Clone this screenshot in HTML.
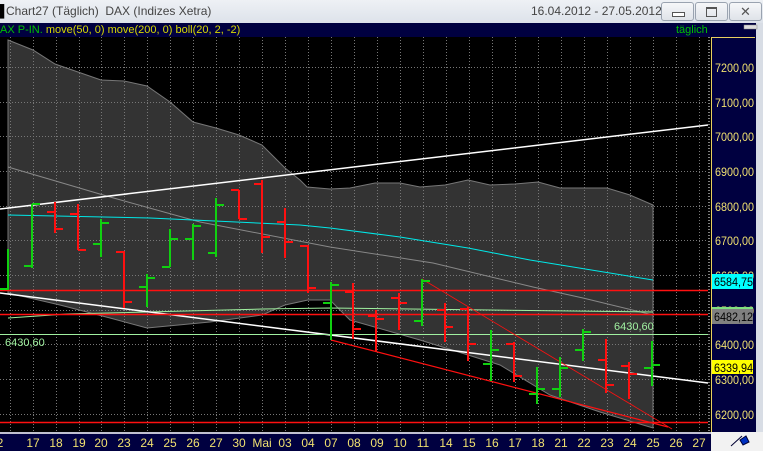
<!DOCTYPE html>
<html><head><meta charset="utf-8"><style>
body{margin:0;width:763px;height:451px;overflow:hidden;background:#000;font-family:"Liberation Sans",sans-serif;}
.t{position:absolute;left:0;top:0;width:763px;height:23px;background:linear-gradient(#eef1f5,#dde2ea);}
.t span{position:absolute;top:4px;font-size:12px;color:#444;white-space:nowrap;}
.b{position:absolute;top:2px;width:31px;height:17px;border:1px solid #9aa3b0;border-radius:3px;background:linear-gradient(#f6f7f9,#dfe3e9);}
.ind{position:absolute;left:0;top:23px;width:711px;height:14px;background:#000040;font-size:11px;line-height:14px;color:#d8d800;}
</style></head><body>
<div class="t"><span style="left:0;color:#000">▌</span><span style="left:6px">Chart27 (Täglich)&nbsp; DAX (Indizes Xetra)</span><span style="left:531px">16.04.2012 - 27.05.2012</span>
<div class="b" style="left:661px"><div style="position:absolute;left:10px;top:9px;width:11px;height:3px;border:1px solid #555;background:#fff"></div></div>
<div class="b" style="left:695px"><div style="position:absolute;left:10px;top:4px;width:9px;height:7px;border:1px solid #555;border-top-width:2px"></div></div>
<div class="b" style="left:729px;font-size:13px;text-align:center;color:#555;line-height:17px">✕</div></div>
<div class="ind"><span style="color:#00c000">AX P-IN.</span> move(50, 0) move(200, 0) boll(20, 2, -2)<span style="position:absolute;left:676px;color:#00c000">täglich</span></div>
<svg width="763" height="451" style="position:absolute;left:0;top:0" font-family="Liberation Sans">
<rect x="711" y="23" width="52" height="428" fill="#000040"/>
<rect x="756" y="23" width="7" height="428" fill="#d8dde5"/>
<rect x="744" y="25" width="13" height="4" fill="#ddd" stroke="#888" stroke-width="0.5"/>
<line x1="711.5" y1="37" x2="711.5" y2="432" stroke="#e8d060"/>
<line x1="711" y1="37.5" x2="755" y2="37.5" stroke="#e8d060"/>
<line x1="709" y1="37" x2="709" y2="432" stroke="#fff" stroke-dasharray="1,2"/>
<polygon fill="#333" stroke="#777" stroke-width="1" points="8,40 33,50 55,64 78,72 101,80 124,81 147,86 170,102 193,122 216,128 239,135 262,145 285,168 300,180 307,187 330,189 350,188 375,183 400,183 420,187 445,185 468,180 490,185 515,184 538,182 560,188 607,188 630,195 653,205 653,428 600,412 550,395 500,365 420,340 350,320 330,300 308,300 285,305 262,315 210,322 147,328 110,318 60,305 8,293"/>
<g stroke="#777" stroke-dasharray="1,2" stroke-width="1" id="grid"></g>
<polyline fill="none" stroke="#888" points="8,167 110,197 200,222 330,247 433,263 533,287 583,298 653,315"/>
<polyline fill="none" stroke="#00e8e8" points="8,215 150,218 300,225 330,228 400,237 468,248 530,260 653,280"/>
<polyline fill="none" stroke="#a0f0a0" points="8,318 67,314 263,309 330,308 653,312"/>
<line x1="0" y1="209" x2="708" y2="125" stroke="#fff" stroke-width="1.5"/>
<line x1="0" y1="293" x2="708" y2="383" stroke="#fff" stroke-width="1.5"/>
<g stroke="#ff1010" stroke-width="1.5"><line x1="0" x2="708" y1="290.5" y2="290.5"/><line x1="0" x2="708" y1="314.5" y2="314.5"/><line x1="0" x2="708" y1="422.5" y2="422.5"/></g>
<line x1="0" x2="708" y1="334.5" y2="334.5" stroke="#a0f0a0"/>
<line x1="331" y1="340" x2="668" y2="427" stroke="#ff1010" stroke-width="1.2"/>
<line x1="422" y1="279" x2="672" y2="429" stroke="#ff1010" stroke-width="0.8"/>
<text x="5" y="346" font-size="11" fill="#a0f0a0">6430,60</text>
<text x="614" y="330" font-size="11" fill="#a0f0a0">6430,60</text>
<g stroke-width="2" id="bars"></g>
<g font-size="12" fill="#f0e070">
<text x="715" y="72" textLength="39" lengthAdjust="spacingAndGlyphs">7200,00</text><text x="715" y="107" textLength="39" lengthAdjust="spacingAndGlyphs">7100,00</text><text x="715" y="141" textLength="39" lengthAdjust="spacingAndGlyphs">7000,00</text><text x="715" y="176" textLength="39" lengthAdjust="spacingAndGlyphs">6900,00</text><text x="715" y="211" textLength="39" lengthAdjust="spacingAndGlyphs">6800,00</text><text x="715" y="245" textLength="39" lengthAdjust="spacingAndGlyphs">6700,00</text><text x="715" y="280" textLength="39" lengthAdjust="spacingAndGlyphs">6600,00</text><text x="715" y="315" textLength="39" lengthAdjust="spacingAndGlyphs">6500,00</text><text x="715" y="349" textLength="39" lengthAdjust="spacingAndGlyphs">6400,00</text><text x="715" y="384" textLength="39" lengthAdjust="spacingAndGlyphs">6300,00</text><text x="715" y="419" textLength="39" lengthAdjust="spacingAndGlyphs">6200,00</text>
</g>
<rect x="712" y="274" width="41" height="15" fill="#00ffff"/><text x="714" y="286" font-size="12" fill="#000" textLength="39" lengthAdjust="spacingAndGlyphs">6584,75</text>
<rect x="712" y="307" width="41" height="3" fill="#80e080"/>
<rect x="712" y="309" width="41" height="15" fill="#808080"/><text x="714" y="321" font-size="12" fill="#000" textLength="39" lengthAdjust="spacingAndGlyphs">6482,12</text>
<rect x="712" y="360" width="41" height="14" fill="#ffff00"/><text x="714" y="372" font-size="12" fill="#000" textLength="39" lengthAdjust="spacingAndGlyphs">6339,94</text>
<rect x="0" y="432" width="711" height="19" fill="#000040"/>
<line x1="0" x2="711" y1="433" y2="433" stroke="#fff" stroke-width="1.5"/>
<rect x="711" y="432" width="52" height="19" fill="#f2f2f2"/>
<path d="M731 446 L742 436 M740 440 L746 436 L749 442 L743 445 Z" stroke="#003" fill="#0030c0" stroke-width="1"/>
<g font-size="12" fill="#f0e070" text-anchor="middle" id="dates"></g>
</svg>
<script>
var ns='http://www.w3.org/2000/svg';
var gr=document.getElementById('grid');
function A(p,a,b,c,d,col){var l=document.createElementNS(ns,'line');l.setAttribute('x1',a);l.setAttribute('y1',b);l.setAttribute('x2',c);l.setAttribute('y2',d);if(col)l.setAttribute('stroke',col);p.appendChild(l);}
[67,102,136,171,206,240,275,310,344,379,414].forEach(function(y){A(gr,0,y+.5,708,y+.5);});
var d=[[10,'2'],[33,'17'],[56,'18'],[79,'19'],[101,'20'],[124,'23'],[147,'24'],[170,'25'],[193,'26'],[216,'27'],[239,'30'],[262,'Mai'],[285,'03'],[308,'04'],[331,'07'],[354,'08'],[377,'09'],[400,'10'],[423,'11'],[446,'14'],[469,'15'],[492,'16'],[515,'17'],[538,'18'],[561,'21'],[584,'22'],[607,'23'],[630,'24'],[653,'25'],[676,'26'],[699,'27']];
d.forEach(function(x){A(gr,x[0]+.5,37,x[0]+.5,432);});
var bars=[[8,249,290,289,null,'g'],[32,204,268,266,204,'g'],[55,202,233,212,229,'r'],[78,204,250,214,250,'r'],[101,219,257,244,223,'g'],[124,251,308,252,302,'r'],[147,274,307,287,278,'g'],[170,229,267,267,239,'g'],[193,224,260,239,226,'g'],[216,198,257,253,205,'g'],[239,190,219,190,219,'r'],[262,180,253,184,237,'r'],[285,208,258,222,242,'r'],[308,245,293,246,288,'r'],[331,282,340,303,285,'g'],[353,283,339,292,329,'r'],[376,310,352,316,319,'r'],[399,293,330,298,303,'r'],[422,279,326,321,281,'g'],[445,303,342,310,327,'r'],[468,307,361,309,344,'r'],[491,330,381,364,350,'g'],[514,342,382,344,376,'r'],[537,367,404,394,389,'g'],[560,357,397,389,368,'g'],[583,329,361,350,332,'g'],[606,339,393,360,385,'r'],[629,362,399,366,374,'r'],[652,341,386,368,365,'g']];
var g=document.getElementById('bars');
bars.forEach(function(b){var c=b[5]=='g'?'#10d010':'#ff1010';A(g,b[0],b[1],b[0],b[2],c);A(g,b[0]-8,b[3],b[0],b[3],c);if(b[4]!==null)A(g,b[0],b[4],b[0]+8,b[4],c);});
var dg=document.getElementById('dates');d.forEach(function(x){var t=document.createElementNS(ns,'text');t.setAttribute('x',x[0]==10?0:x[0]);t.setAttribute('y',447);t.textContent=x[1];dg.appendChild(t);});
</script>
</body></html>
